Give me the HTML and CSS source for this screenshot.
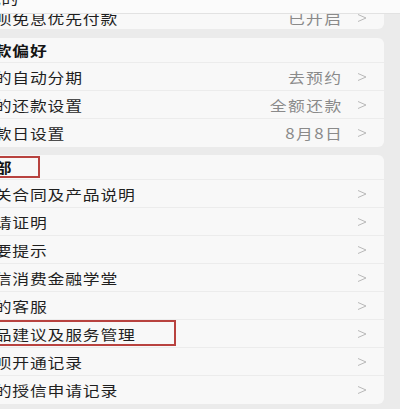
FILE: index.html
```html
<!DOCTYPE html>
<html lang="zh-CN">
<head>
<meta charset="utf-8">
<title>花呗设置</title>
<link rel="stylesheet" href="styles.css">
</head>
<body>
<div class="topbar"><span class="topbar-text">我的</span></div>
<div class="page">
  <section class="card card-first">
    <div class="row row-first">
      <span class="label">花呗免息优先付款</span>
      <span class="value">已开启</span>
      <svg class="chev" viewBox="0 0 10 10"><polyline points="1,1.5 9,5 1,8.5"/></svg>
    </div>
  </section>

  <section class="card">
    <div class="head"><span class="label bold">还款偏好</span></div>
    <div class="row">
      <span class="label">我的自动分期</span>
      <span class="value">去预约</span>
      <svg class="chev" viewBox="0 0 10 10"><polyline points="1,1.5 9,5 1,8.5"/></svg>
    </div>
    <div class="row">
      <span class="label">我的还款设置</span>
      <span class="value">全额还款</span>
      <svg class="chev" viewBox="0 0 10 10"><polyline points="1,1.5 9,5 1,8.5"/></svg>
    </div>
    <div class="row">
      <span class="label">还款日设置</span>
      <span class="value">8月8日</span>
      <svg class="chev" viewBox="0 0 10 10"><polyline points="1,1.5 9,5 1,8.5"/></svg>
    </div>
  </section>

  <section class="card">
    <div class="head head-marked"><span class="label bold">全部</span><span class="mark mark-head"></span></div>
    <div class="row">
      <span class="label">相关合同及产品说明</span>
      <svg class="chev" viewBox="0 0 10 10"><polyline points="1,1.5 9,5 1,8.5"/></svg>
    </div>
    <div class="row">
      <span class="label">申请证明</span>
      <svg class="chev" viewBox="0 0 10 10"><polyline points="1,1.5 9,5 1,8.5"/></svg>
    </div>
    <div class="row">
      <span class="label">重要提示</span>
      <svg class="chev" viewBox="0 0 10 10"><polyline points="1,1.5 9,5 1,8.5"/></svg>
    </div>
    <div class="row">
      <span class="label">诚信消费金融学堂</span>
      <svg class="chev" viewBox="0 0 10 10"><polyline points="1,1.5 9,5 1,8.5"/></svg>
    </div>
    <div class="row">
      <span class="label">我的客服</span>
      <svg class="chev" viewBox="0 0 10 10"><polyline points="1,1.5 9,5 1,8.5"/></svg>
    </div>
    <div class="row row-marked">
      <span class="label">产品建议及服务管理</span>
      <span class="mark mark-row"></span>
      <svg class="chev" viewBox="0 0 10 10"><polyline points="1,1.5 9,5 1,8.5"/></svg>
    </div>
    <div class="row">
      <span class="label">花呗开通记录</span>
      <svg class="chev" viewBox="0 0 10 10"><polyline points="1,1.5 9,5 1,8.5"/></svg>
    </div>
    <div class="row">
      <span class="label">我的授信申请记录</span>
      <svg class="chev" viewBox="0 0 10 10"><polyline points="1,1.5 9,5 1,8.5"/></svg>
    </div>
  </section>
</div>
</body>
</html>
```

FILE: styles.css
```css
html, body {
  margin: 0;
  padding: 0;
  overflow: hidden;
}
body {
  width: 400px;
  height: 409px;
  background: #ebebeb;
  font-family: "Noto Sans CJK SC", "Noto Sans", sans-serif;
  color: #262626;
  position: relative;
}
.topbar {
  position: absolute;
  top: 0;
  left: 0;
  right: 0;
  height: 13px;
  background: #fbfbfb;
  border-bottom: 1px solid #e2e2e2;
  z-index: 2;
  overflow: hidden;
}
.topbar-text {
  position: absolute;
  left: -16px;
  top: -16px;
  font-size: 14px;
  line-height: 28px;
  letter-spacing: 0.6px;
  white-space: nowrap;
  transform: scaleX(1.2);
  transform-origin: left center;
}
.page {
  margin: 0 16px 0 -40px;
  padding-top: 1px;
  display: flex;
  flex-direction: column;
  gap: 9px;
  overflow: hidden;
}
.card {
  background: #f8f8f8;
  border-radius: 0 6px 6px 0;
  display: flex;
  flex-direction: column;
}
.card + .card + .card {
  margin-top: -1px;
}
.row, .head {
  display: flex;
  align-items: center;
  padding: 0 17px 0 17px;
  box-sizing: border-box;
  position: relative;
  white-space: nowrap;
}
.row {
  height: 28px;
  border-bottom: 1px solid #ececec;
}
.row:last-child {
  border-bottom: 0;
}
.row-first {
  padding-top: 5px;
}
.head {
  height: 25px;
  border-bottom: 1px solid #ececec;
}
.label {
  font-size: 14px;
  letter-spacing: 0.7px;
  flex: 1;
  color: #1f1f1f;
  transform: scaleX(1.2);
  transform-origin: left center;
}
.bold {
  font-weight: 700;
  color: #151515;
}
.value {
  font-size: 14px;
  letter-spacing: 1.2px;
  color: #8a8a8a;
  margin-right: 14px;
  transform: scaleX(1.2);
  transform-origin: right center;
}
.chev {
  width: 10px;
  height: 10px;
  flex: none;
}
.chev polyline {
  fill: none;
  stroke: #b9b9b9;
  stroke-width: 1;
}
.mark {
  position: absolute;
  border: 2px solid #b8423f;
  box-sizing: border-box;
}
.mark-head {
  left: 0;
  width: 80px;
  top: 1px;
  bottom: 1px;
}
.mark-row {
  left: 0;
  width: 216px;
  top: 0;
  bottom: 1px;
}
```
